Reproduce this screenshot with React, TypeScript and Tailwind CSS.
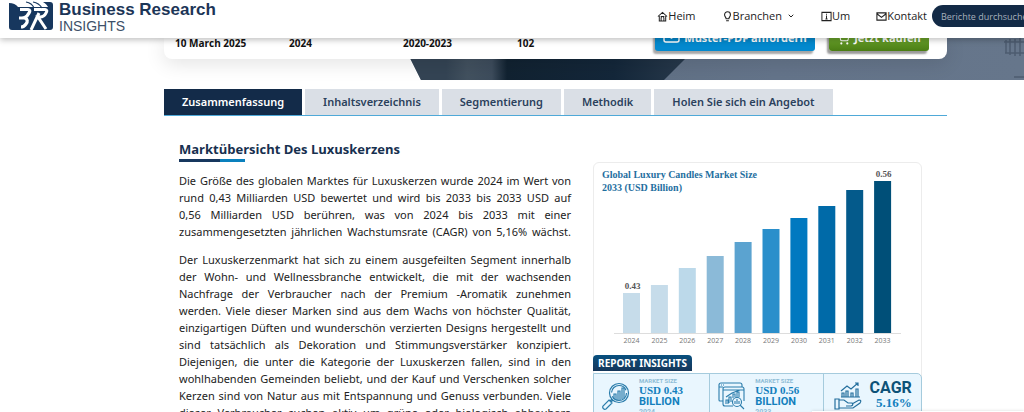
import React from "react";
import { ChevronDown, ShoppingCart } from "lucide-react";

const tabs = ["Zusammenfassung", "Inhaltsverzeichnis", "Segmentierung", "Methodik", "Holen Sie sich ein Angebot"];

const bars = [
  { year: "2024", top: 130, fill: "#c6dcea", value: "0.43" },
  { year: "2025", top: 122, fill: "#c6dcea" },
  { year: "2026", top: 105, fill: "#bcd9ea" },
  { year: "2027", top: 93, fill: "#8bbad8" },
  { year: "2028", top: 79, fill: "#5ba3d0" },
  { year: "2029", top: 66, fill: "#2a8fcb" },
  { year: "2030", top: 55, fill: "#0079c0" },
  { year: "2031", top: 43, fill: "#006aa8" },
  { year: "2032", top: 27, fill: "#045a8b" },
  { year: "2033", top: 18, fill: "#004f78", value: "0.56" },
];

const facts = [
  { label: "10 March 2025", width: "w-[114px]" },
  { label: "2024", width: "w-[114px]" },
  { label: "2020-2023", width: "w-[114px]" },
  { label: "102", width: "w-[138px]" },
];

const summary = [
  "Die Größe des globalen Marktes für Luxuskerzen wurde 2024 im Wert von",
  "rund 0,43 Milliarden USD bewertet und wird bis 2033 bis 2033 USD auf",
  "0,56 Milliarden USD berühren, was von 2024 bis 2033 mit einer",
  "zusammengesetzten jährlichen Wachstumsrate (CAGR) von 5,16% wächst.",
];

const details = [
  "Der Luxuskerzenmarkt hat sich zu einem ausgefeilten Segment innerhalb",
  "der Wohn- und Wellnessbranche entwickelt, die mit der wachsenden",
  "Nachfrage der Verbraucher nach der Premium -Aromatik zunehmen",
  "werden. Viele dieser Marken sind aus dem Wachs von höchster Qualität,",
  "einzigartigen Düften und wunderschön verzierten Designs hergestellt und",
  "sind tatsächlich als Dekoration und Stimmungsverstärker konzipiert.",
  "Diejenigen, die unter die Kategorie der Luxuskerzen fallen, sind in den",
  "wohlhabenden Gemeinden beliebt, und der Kauf und Verschenken solcher",
  "Kerzen sind von Natur aus mit Entspannung und Genuss verbunden. Viele",
  "dieser Verbraucher suchen aktiv um grüne oder biologisch abbaubare",
];

function Paragraph({ lines }: { lines: string[] }) {
  return (
    <p className="text-justify [text-align-last:justify]">
      {lines.map((line) => (
        <React.Fragment key={line}>
          {line}
          <br />
        </React.Fragment>
      ))}
    </p>
  );
}

function Logo() {
  return (
    <a href="#home" className="flex items-start gap-[6px] no-underline">
      <svg viewBox="0 0 44 30" className="h-[30px] w-[44px] shrink-0" aria-hidden="true">
        <path d="M0 3Q6 3 9 7H44V27Q44 30 41 30H3Q0 30 0 27Z" fill="#17375e" />
        <path d="M34 2H41Q44 2 44 5V9H40Q38 4 34 2Z" fill="#17375e" />
        <path d="M11 9.500H19Q22 10 20 13L18 16Q16 18 13 18H10M16 18Q20 20 17 24Q15 27 12 27" stroke="#fff" strokeWidth="3.200" fill="none" />
        <path d="M25 9.500H36Q39 10 37 13Q35 17 31 17H29L37 29M30 13L22 30" stroke="#fff" strokeWidth="3" fill="none" />
        <path d="M17 2Q23 3 25 8M24 2Q30 3 33 8" stroke="#17375e" strokeWidth="1.200" fill="none" />
      </svg>
      <span className="flex flex-col font-['Liberation_Sans',sans-serif] text-[#1c3557]">
        <span className="text-[17px] leading-[20px] font-bold">Business Research</span>
        <span className="text-[14px] leading-[12px] text-[#3d5068]">INSIGHTS</span>
      </span>
    </a>
  );
}

function Header() {
  return (
    <header className="relative z-20 flex h-[38px] shrink-0 items-start bg-white pl-[9px] shadow-[0_2px_6px_rgba(0,0,0,0.25)]">
      <Logo />
      <nav className="ml-auto flex shrink-0 items-center pt-[5px] text-[11px] leading-[22px] text-[#222]">
        <a href="#heim" className="mr-[26px] flex items-center">
          <svg viewBox="0 0 12 12" className="size-[11px]" fill="none" stroke="currentColor" strokeWidth="1.1"><path d="M1 6 6 1.500 11 6M2.500 5.500V11h7V5.500M4.500 11V7.500a1.500 1.500 0 0 1 3 0V11M4 6h4" /></svg>
          Heim
        </a>
        <a href="#branchen" className="mr-[26px] flex items-center">
          <svg viewBox="0 0 12 12" className="size-[11px]" fill="none" stroke="currentColor" strokeWidth="1.2"><path d="M4.500 8.500C4.500 7 2.800 6.200 2.800 4a3.200 3.200 0 0 1 6.400 0c0 2.200-1.700 3-1.700 4.500zM4.500 10.700h3" /></svg>
          Branchen
          <ChevronDown className="ml-[5px] size-[8px]" strokeWidth={3} />
        </a>
        <a href="#um" className="mr-[26px] flex items-center">
          <svg viewBox="0 0 12 12" className="size-[11px]" fill="none" stroke="currentColor" strokeWidth="1.1"><path d="M1 1.500h10v9H1zM6 5v4M6 3v1M4.800 8.700h2.400" /></svg>
          Um
        </a>
        <a href="#kontakt" className="mr-[5px] flex items-center">
          <svg viewBox="0 0 12 12" className="size-[11px]" fill="none" stroke="currentColor" strokeWidth="1.2"><path d="M1 2h10v8H1zM1 3l5 4 5-4" /></svg>
          Kontakt
        </a>
      </nav>
      <input
        aria-label="Berichte durchsuchen"
        placeholder="Berichte durchsuchen"
        className="mt-[5px] -mr-[28px] h-[22px] w-[120px] shrink-0 rounded-full bg-[#132a46] px-[9px] text-[9px] text-white placeholder:text-[#a7b0bc]"
      />
    </header>
  );
}

function Hero() {
  return (
    <section className="relative flex h-[42px] shrink-0 items-start">
      <div className="absolute inset-y-0 right-0 left-[400px]">
        <svg viewBox="0 0 624 42" preserveAspectRatio="none" className="h-full w-full" aria-hidden="true">
          <defs>
            <linearGradient id="sky" x1="0" x2="1"><stop offset="0" stopColor="#5a6a7c" /><stop offset="0.6" stopColor="#64748a" /><stop offset="1" stopColor="#66768b" /></linearGradient>
            <linearGradient id="tower" x1="0" x2="1"><stop offset="0" stopColor="#344454" /><stop offset="0.15" stopColor="#344454" /><stop offset="0.22" stopColor="#42515f" /><stop offset="0.3" stopColor="#3d4c5c" /><stop offset="0.35" stopColor="#112231" /><stop offset="0.7" stopColor="#14273a" /><stop offset="1" stopColor="#2d3e50" /></linearGradient>
          </defs>
          <path d="M0 0H624V42H21Z" fill="url(#sky)" />
          <path d="M0 0H306L264 42H21Z" fill="url(#tower)" />
          <path d="M606 2V15M610 1V17M615 1V18M620 0V18M604 4H624M605 15H624M614 39H624" stroke="#4d5c70" strokeWidth="1.500" />
        </svg>
      </div>
      <div className="relative mr-[77px] ml-[164px] flex h-[21px] flex-1 items-start rounded-b-lg bg-white pr-[18px] pl-[11px] shadow-[0_4px_20px_rgba(0,0,0,0.12)]">
        <div className="-mt-[3px] flex flex-1 text-[10px] leading-[16px] font-bold text-[#111]">
          {facts.map((f) => (
            <span key={f.label} className={f.width}>{f.label}</span>
          ))}
        </div>
        <div className="-mt-[13px] flex shrink-0 gap-[14px] text-[11px] font-bold text-white">
          <button className="flex h-[26px] w-[160px] items-center justify-center gap-[4px] rounded-[3px] bg-[#0389ce] whitespace-nowrap shadow-[-2px_3px_2px_rgba(0,0,0,0.35)]">
            <svg viewBox="0 0 17 13" className="mb-[4px] h-[13px] w-[17px] shrink-0" fill="none" stroke="currentColor" strokeWidth="1.500"><rect x="1" y="1" width="15" height="11" rx="2" /><path d="M1 3l7.500 5L16 3" /></svg>
            Muster-PDF anfordern
          </button>
          <button className="flex h-[26px] w-[100px] items-center justify-center gap-[4px] rounded-[3px] bg-linear-to-b from-[#8ccc42] to-[#4a7d14] whitespace-nowrap shadow-[-2px_3px_2px_rgba(0,0,0,0.4)]">
            <ShoppingCart className="size-[13px] shrink-0" />
            Jetzt kaufen
          </button>
        </div>
      </div>
    </section>
  );
}

function Chart() {
  return (
    <figure>
      <svg viewBox="0 0 327 192" className="block w-full" role="img" aria-label="Global Luxury Candles Market Size">
        <g className="font-['Liberation_Serif',serif] text-[10px] font-bold" fill="#1f6f9f">
          <text x="8" y="15">Global Luxury Candles Market Size</text>
          <text x="8" y="28">2033 (USD Billion)</text>
        </g>
        <path d="M20 170.500H307" stroke="#ddd" />
        {bars.map((b, i) => (
          <g key={b.year}>
            <rect x={29 + i * 27.9} y={b.top} width="17" height={170 - b.top} fill={b.fill} />
            <text x={37.5 + i * 27.9} y="180" textAnchor="middle" className="text-[7px]" fill="#777">{b.year}</text>
            {b.value && (
              <text x={38.5 + i * 27.9} y={b.top - 4} textAnchor="middle" className="font-['Liberation_Serif',serif] text-[9px] font-bold" fill="#555">{b.value}</text>
            )}
          </g>
        ))}
      </svg>
    </figure>
  );
}

function MagnifierIcon() {
  return (
    <svg viewBox="0 0 28 28" className="h-[28px] w-[28px] shrink-0" fill="none" stroke="#2a7cab" strokeWidth="1.2">
      <circle cx="17" cy="11" r="9.500" /><circle cx="17" cy="11" r="7.500" strokeDasharray="20 4" />
      <path d="M10 17 8 19M11 18l-2 2M7 18l3 3-6 6c-2 1-4-1-3-3zM12 17v-5h2v6M16 18V9h2v9M20 17V6h2v10" />
    </svg>
  );
}

function DashboardIcon() {
  return (
    <svg viewBox="0 0 28 28" className="h-[28px] w-[28px] shrink-0" fill="none" stroke="#2a7cab" strokeWidth="1.1">
      <path d="M5 19H2Q1 19 1 18V3Q1 1 3 1H22Q24 1 24 3V5M1 5H5M3 3h1M5 3h1" />
      <path d="M15 24H7Q5 24 5 22V7Q5 5 7 5H24Q26 5 26 7V19M5 8H26M8 22v-4h2v4M11 21v-6h2v5M15 16v-4h2v3M19 15v-5h2v5M8 15l6-4 8-3" />
      <circle cx="19" cy="20" r="4.500" /><path d="M17 22v-3M19 22v-5M21 22v-3M22 23l4 4" />
    </svg>
  );
}

function GrowthIcon() {
  return (
    <svg viewBox="0 0 28 28" className="h-[28px] w-[28px] shrink-0" fill="none" stroke="#246f9d" strokeWidth="1.2">
      <path d="M7 15H26M8 15v-4h2v4M12 15V9h2v6M17 15v-4h2v4M22 15V7h2v8M7 9l6-5 4 3 7-6M21 1h3v3" />
      <path d="M1 17h4v10H1zM5 18h5l4 3h4q2 2-1 3h-5M18 22l7-4q3 0 1 3l-7 5H5" />
    </svg>
  );
}

function Insights() {
  return (
    <section>
      <h3 className="-ml-px w-[99px] rounded-t-[4px] bg-linear-to-b from-[#06507f] to-[#14365a] text-center font-['Noto_Sans',sans-serif] text-[10px] leading-[16px] font-bold whitespace-nowrap text-white">REPORT INSIGHTS</h3>
      <div className="-mx-px mt-[2px] grid h-[60px] grid-cols-[117fr_114fr_98fr] divide-x divide-[#a5cbdd] rounded-tr-[5px] border border-[#a5cbdd] bg-[#e9f6fe]">
        {[
          { icon: <MagnifierIcon />, value: "USD 0.43", year: "2024" },
          { icon: <DashboardIcon />, value: "USD 0.56", year: "2033" },
        ].map((c) => (
          <div key={c.year} className="flex gap-[9px] pt-[8px] pl-[8px]">
            {c.icon}
            <dl className="-mt-[5px] font-['Roboto',sans-serif] font-bold text-[#1380bd]">
              <dt className="text-[6px] leading-[7px] text-[#8fbdd6]">MARKET SIZE</dt>
              <dd className="font-['Liberation_Serif',serif] text-[11px] leading-[12px]">{c.value}</dd>
              <dd className="text-[11px] leading-[11px]">BILLION</dd>
              <dd className="text-[7px] leading-[10px] text-[#8fbdd6]">{c.year}</dd>
            </dl>
          </div>
        ))}
        <div className="flex gap-[8px] pt-[8px] pl-[10px]">
          <GrowthIcon />
          <dl className="-mt-[3px]">
            <dt className="font-['Roboto',sans-serif] text-[16px] leading-[17px] font-bold text-[#0d5278]">CAGR</dt>
            <dd className="text-right font-['Liberation_Serif',serif] text-[13px] leading-[14px] font-bold text-[#1380bd]">5.16%</dd>
          </dl>
        </div>
      </div>
    </section>
  );
}

export default function App() {
  return (
    <div className="relative flex h-screen flex-col overflow-hidden bg-white font-['Open_Sans',sans-serif]">
      <Header />
      <Hero />
      <main className="mt-[9px] mr-[77px] ml-[164px]">
        <div role="tablist" className="flex gap-[3px] border-b border-[#4fa9d8]">
          {tabs.map((t, i) => (
            <button
              key={t}
              role="tab"
              aria-selected={i === 0}
              className={`h-[26px] px-[18px] font-['Noto_Sans',sans-serif] text-[11px] font-semibold whitespace-nowrap ${i === 0 ? "bg-[#132b49] text-white" : "bg-[#dadfe6] text-[#2b415c]"}`}
            >
              {t}
            </button>
          ))}
        </div>
        <div className="flex items-start gap-[22px] pr-[25px] pl-[15px]">
          <article className="flex-1 pt-[23px] font-['Noto_Sans',sans-serif] text-[11px] leading-[17px] text-[#222]">
            <h2 className="font-['Open_Sans',sans-serif] text-[13px] leading-[20px] font-bold text-[#17304f]">Marktübersicht Des Luxuskerzens</h2>
            <div className="flex h-[3px]"><span className="w-[41px] bg-[#17375e]" /><span className="w-[25px] bg-[#0a80bd]" /></div>
            <div className="mt-[10px] space-y-[11px]">
              <Paragraph lines={summary} />
              <Paragraph lines={details} />
            </div>
          </article>
          <aside className="mt-[46px] w-[329px] shrink-0 rounded-t-md border border-[#ececec]">
            <Chart />
            <Insights />
          </aside>
        </div>
      </main>
      <div className="absolute right-0 bottom-0 left-[812px] h-px bg-white shadow-[0_0_3px_rgba(0,0,0,0.25)]" />
    </div>
  );
}
